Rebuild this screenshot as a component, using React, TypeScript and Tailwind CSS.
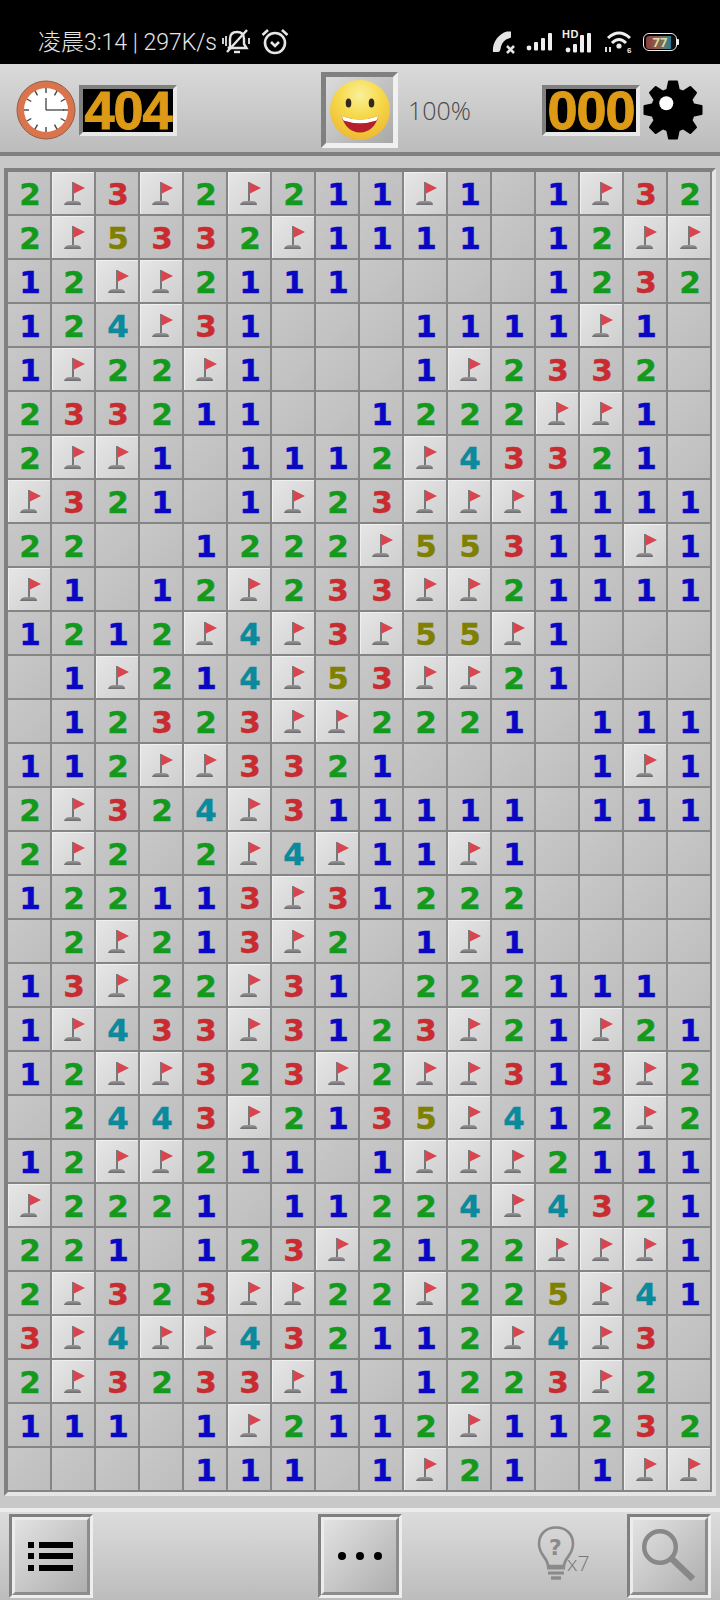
import React from "react";

const BOARD = [
  "2F3F2F211F101F32",
  "2F5332F1111012FF",
  "12FF211100001232",
  "124F310001111F10",
  "1F22F10001F23320",
  "233211001222FF10",
  "2FF101112F433210",
  "F32101F23FFF1111",
  "22001222F55311F1",
  "F1012F233FF21111",
  "1212F4F3F55F1000",
  "01F214F53FF21000",
  "012323FF22210111",
  "112FF332100001F1",
  "2F324F3111110111",
  "2F202F4F11F10000",
  "122113F312220000",
  "02F213F201F10000",
  "13F22F3102221110",
  "1F433F3123F21F21",
  "12FF323F2FF313F2",
  "02443F2135F412F2",
  "12FF21101FFF2111",
  "F2221011224F4321",
  "2210123F2122FFF1",
  "2F323FF22F225F41",
  "3F4FF432112F4F30",
  "2F3233F101223F20",
  "11101F2112F11232",
  "000011101F2101FF",
];

const DIGIT: Record<string, string> = {
  "1": "text-[#0808c4]",
  "2": "text-[#139a1c]",
  "3": "text-[#c82c30]",
  "4": "text-[#0a8a9c]",
  "5": "text-[#808000]",
};

function Flag() {
  return (
    <svg width="42" height="42" viewBox="0 0 42 42">
      <defs>
        <linearGradient id="pole" x1="0" y1="0" x2="0" y2="1">
          <stop offset="0" stopColor="#9a9a9a" />
          <stop offset="1" stopColor="#6a6a6a" />
        </linearGradient>
      </defs>
      <rect x="20" y="10" width="2" height="19" fill="#777777" />
      <path d="M22 10.5 L33 16 L22 21.5 Z" fill="#d8454f" />
      <path d="M12 33 Q13 29 18 29 H24 Q29 29 29 33 Z" fill="url(#pole)" />
    </svg>
  );
}

function Cell({ v }: { v: string }) {
  if (v === "F") {
    return (
      <div className="w-[44px] h-[44px] border-r-[2px] border-b-[2px] border-[#858585]">
        <div className="w-[42px] h-[42px] flex items-center justify-center border-t border-l border-[#efefef] bg-[linear-gradient(135deg,#e6e6e6,#cecece)]">
          <div className="-mt-[1px] -ml-[1px] w-[42px] h-[42px] shrink-0">
            <Flag />
          </div>
        </div>
      </div>
    );
  }
  return (
    <div className="w-[44px] h-[44px] border-r-[2px] border-b-[2px] border-[#858585] bg-[linear-gradient(135deg,#c8c8c8,#bdbdbd)] flex items-center justify-center pl-[2px] pt-[3px]">
      {v !== "0" && (
        <span className={`font-['DejaVu_Sans'] font-bold text-[31px] leading-none [-webkit-text-stroke:0.4px_currentColor] ${DIGIT[v]}`}>{v}</span>
      )}
    </div>
  );
}

function Lcd({ value }: { value: string }) {
  return (
    <div className="w-[98px] h-[51px] border-[4px] border-t-[#808080] border-l-[#808080] border-b-[#e8e8e8] border-r-[#e8e8e8] bg-black flex items-center justify-center">
      <span className="font-['Liberation_Sans'] font-bold text-[54px] leading-none tracking-[-1px] text-[#dc9a16] [-webkit-text-stroke:1px_#dc9a16]">
        {value}
      </span>
    </div>
  );
}

function Clock() {
  const ticks = Array.from({ length: 12 }, (_, i) => i * 30);
  return (
    <svg width="60" height="60" viewBox="-30 -30 60 60">
      <circle r="29" fill="#d9744c" stroke="#8f6048" strokeWidth="1" />
      <circle r="22" fill="#ffffff" />
      {ticks.map((a) => (
        <line key={a} x1="0" y1="-22" x2="0" y2="-17" stroke="#444" strokeWidth="1.4" transform={`rotate(${a})`} />
      ))}
      <line x1="0" y1="0" x2="0" y2="-12" stroke="#333" strokeWidth="1.2" />
      <line x1="0" y1="0" x2="18" y2="0" stroke="#333" strokeWidth="1.2" />
    </svg>
  );
}

function Smiley() {
  return (
    <svg width="62" height="62" viewBox="-31 -31 62 62">
      <defs>
        <radialGradient id="face" cx="50%" cy="25%" r="80%">
          <stop offset="0" stopColor="#faf09a" />
          <stop offset="0.45" stopColor="#f6d94a" />
          <stop offset="1" stopColor="#edb52e" />
        </radialGradient>
      </defs>
      <circle r="30" fill="url(#face)" />
      <ellipse cx="-11.5" cy="-7" rx="2.8" ry="4.6" fill="#33291a" />
      <ellipse cx="11.5" cy="-7" rx="2.8" ry="4.6" fill="#33291a" />
      <path d="M-18.5 6 Q0 13 18.5 6 Q14 22 0 22.5 Q-14 22 -18.5 6 Z" fill="#b41f2a" />
      <path d="M-18.5 6 Q0 13 18.5 6 L16.5 10.5 Q0 16 -16.5 10.5 Z" fill="#ffffff" />
    </svg>
  );
}

function Gear() {
  const teeth = Array.from({ length: 8 }, (_, i) => i * 45);
  return (
    <svg width="60" height="60" viewBox="-30 -30 60 60">
      <circle r="22" fill="#000" />
      {teeth.map((a) => (
        <path key={a} d="M-7 -19 L-5 -28.5 Q-5 -29.5 -4 -29.5 H4 Q5 -29.5 5 -28.5 L7 -19 Z" fill="#000" transform={`rotate(${a})`} />
      ))}
      <circle cx="-6.7" cy="-6.7" r="7" fill="#fff" />
    </svg>
  );
}

const BEVEL_BTN =
  "w-[84px] h-[84px] shrink-0 border-[3px] border-t-[#808080] border-l-[#808080] border-b-[#eeeeee] border-r-[#eeeeee]";

function BevelInner({ children }: { children: React.ReactNode }) {
  return (
    <div className="w-full h-full border-[3px] border-t-[#ececec] border-l-[#ececec] border-b-[#8c8c8c] border-r-[#8c8c8c] bg-[linear-gradient(135deg,#e2e2e2,#aeaeae)] flex items-center justify-center">
      {children}
    </div>
  );
}

function StatusIcons() {
  return (
    <div className="flex items-center ml-[203px] shrink-0">
      <svg width="26" height="24" viewBox="0 0 26 24" className="mt-[1px] shrink-0">
        <path d="M1 21 C0 12 6 3 15 0.5 L19 0.5 V6.5 L14 8.5 C10.5 11 9 14 8.5 18 Q8 21 6 21 Z" fill="#e4e4e4" />
        <path d="M15 15 L22 22 M22 15 L15 22" stroke="#e4e4e4" strokeWidth="2.6" />
      </svg>
      <svg width="27" height="20" viewBox="0 0 27 20" className="ml-[8px] shrink-0">
        <circle cx="3" cy="16" r="2.4" fill="#eee" />
        <rect x="8" y="10" width="4" height="8.5" rx="1" fill="#eee" />
        <rect x="15" y="6" width="4" height="12.5" rx="1" fill="#eee" />
        <rect x="22" y="1" width="4" height="17.5" rx="1" fill="#eee" />
      </svg>
      <div className="relative w-[30px] h-[24px] ml-[9px] shrink-0">
        <span className="absolute left-[0px] top-[-1px] font-['Liberation_Sans'] font-bold text-[11px] leading-none tracking-[0.5px] text-[#eee]">HD</span>
        <svg width="30" height="24" viewBox="0 0 30 24" className="absolute left-0 top-0">
          <circle cx="6" cy="20" r="2.4" fill="#eee" />
          <rect x="11" y="14" width="4" height="8.5" rx="1" fill="#eee" />
          <rect x="18" y="5" width="4" height="17.5" rx="1" fill="#eee" />
          <rect x="25" y="3" width="4" height="19.5" rx="1" fill="#eee" />
        </svg>
      </div>
      <svg width="30" height="24" viewBox="0 0 30 24" className="ml-[13px] shrink-0">
        <path d="M3 8 Q14 -2 25 8" stroke="#eee" strokeWidth="3" fill="none" />
        <path d="M7 13 Q14 6 21 13" stroke="#eee" strokeWidth="3" fill="none" />
        <circle cx="14" cy="16" r="2.6" fill="#eee" />
        <rect x="0" y="17" width="2" height="5" fill="#ddd" />
        <rect x="4" y="17" width="2" height="5" fill="#ddd" />
        <text x="22" y="23" fontFamily="Liberation Sans" fontWeight="700" fontSize="8" fill="#eee">6</text>
      </svg>
      <div className="ml-[8px] w-[36px] h-[18px] flex items-center shrink-0">
        <div className="w-[34px] h-[18px] shrink-0 rounded-[6px] border-[1.5px] border-[#eee] p-[1.5px]">
          <div className="w-full h-full rounded-[3px] bg-[linear-gradient(90deg,#8a3d3d_0%,#8a5a4a_35%,#5a7a70_65%,#2a7a90_85%,#111_85%)] flex items-center justify-center">
            <span className="font-['Roboto'] font-bold text-[13px] leading-none text-[#e8d8a0]">77</span>
          </div>
        </div>
        <div className="w-[2px] h-[6px] bg-[#eee] rounded-r-[1px]" />
      </div>
    </div>
  );
}

export default function App() {
  return (
    <div className="w-[720px] h-[1600px] flex flex-col overflow-hidden bg-[#c8c8c8]">
      {/* status bar */}
      <div className="h-[64px] bg-black flex items-center pt-[20px] pl-[38px]">
        <span className="font-['Roboto','Noto_Sans_CJK_SC',sans-serif] font-light text-[23px] leading-none text-[#e6e6e6] whitespace-nowrap w-[178px] shrink-0">
          凌晨3:14 | 297K/s
        </span>
        <svg width="30" height="26" viewBox="0 0 30 26" className="ml-[6px] shrink-0" fill="none" stroke="#e6e6e6" strokeWidth="2.4">
          <path d="M8 18 V10 Q8 3 15 3 Q22 3 22 10 V15 L24.5 19 H6 Z" />
          <path d="M12 23 H18" />
          <path d="M25 1 L5 23" />
          <path d="M1 9 V15 M4 7 V17 M27 9 V15" strokeWidth="1.8" />
        </svg>
        <svg width="28" height="28" viewBox="0 0 28 28" className="ml-[9px] shrink-0" fill="none" stroke="#e6e6e6" strokeWidth="2.6">
          <circle cx="14" cy="15" r="10" />
          <path d="M1.5 7 L7 2 M26.5 7 L21 2" />
          <path d="M10 14 L14 18 L18 14" />
        </svg>
        <StatusIcons />
      </div>

      {/* header */}
      <div className="h-[92px] border-b-[4px] border-[#808080] bg-[linear-gradient(180deg,#dadada,#bcbcbc)] flex items-center pt-[4px]">
        <div className="ml-[16px]">
          <Clock />
        </div>
        <div className="ml-[3px]">
          <Lcd value="404" />
        </div>
        <div className="ml-[144px] w-[77px] h-[76px] border-[5px] border-t-[#808080] border-l-[#808080] border-b-[#f0f0f0] border-r-[#f0f0f0]">
          <div className="w-full h-full bg-[linear-gradient(135deg,#dcdcdc,#a8a8a8)] flex items-center justify-center">
            <Smiley />
          </div>
        </div>
        <span className="ml-[10px] w-[134px] font-['Open_Sans'] font-light text-[25px] leading-none text-[#4a4a4a]">100%</span>
        <Lcd value="000" />
        <div className="ml-[3px]">
          <Gear />
        </div>
      </div>

      {/* board area */}
      <div className="h-[1352px] pt-[12px] pl-[4px]">
        <div className="w-[712px] border-[4px] border-t-[#808080] border-l-[#808080] border-b-[#e6e6e6] border-r-[#e6e6e6] grid grid-cols-[repeat(16,44px)]">
          {BOARD.flatMap((row, r) =>
            row.split("").map((v, c) => <Cell key={`${r}-${c}`} v={v} />)
          )}
        </div>
      </div>

      {/* bottom bar */}
      <div className="h-[92px] border-t-[4px] border-[#ececec] bg-[linear-gradient(180deg,#dcdcdc,#bcbcbc)] flex items-start pt-[2px] pl-[9px]">
        <div className={BEVEL_BTN}>
          <BevelInner>
            <svg width="46" height="29" viewBox="0 0 46 29">
              <rect x="0" y="0" width="6" height="6" fill="#000" />
              <rect x="0" y="11" width="6" height="6" fill="#000" />
              <rect x="0" y="23" width="6" height="6" fill="#000" />
              <rect x="11" y="0" width="34" height="6" fill="#000" />
              <rect x="11" y="11" width="34" height="6" fill="#000" />
              <rect x="11" y="23" width="34" height="6" fill="#000" />
            </svg>
          </BevelInner>
        </div>
        <div className={`${BEVEL_BTN} ml-[225px]`}>
          <BevelInner>
            <svg width="44" height="10" viewBox="0 0 44 10">
              <circle cx="4" cy="5" r="4" fill="#000" />
              <circle cx="22" cy="5" r="4" fill="#000" />
              <circle cx="40" cy="5" r="4" fill="#000" />
            </svg>
          </BevelInner>
        </div>
        <div className="ml-[135px] w-[90px] h-[84px] flex items-start pt-[12px] shrink-0">
          <svg width="38" height="56" viewBox="0 0 38 56" fill="none" stroke="#8a8a8a" strokeWidth="2.6" className="shrink-0">
            <path d="M11 40 C11 32 2 29 2 18 C2 8 9 1.5 19 1.5 C29 1.5 36 8 36 18 C36 29 27 32 27 40 Z" />
            <path d="M10 42 H28 M11 47 H27" strokeWidth="3" />
            <path d="M14 52 H24" strokeWidth="3.4" />
            <text x="18.5" y="29" textAnchor="middle" fontFamily="DejaVu Sans" fontWeight="700" fontSize="22" fill="#8a8a8a" stroke="none">?</text>
          </svg>
          <span className="font-['Open_Sans'] font-light text-[21px] leading-none text-[#777777] mt-[27px] -ml-[8px]">x7</span>
        </div>
        <div className={BEVEL_BTN}>
          <BevelInner>
            <svg width="58" height="58" viewBox="0 0 58 58" fill="none" stroke="#888888">
              <circle cx="20" cy="20" r="15.8" strokeWidth="4.5" />
              <path d="M31 31 L53 52" strokeWidth="6.5" />
            </svg>
          </BevelInner>
        </div>
      </div>
    </div>
  );
}
